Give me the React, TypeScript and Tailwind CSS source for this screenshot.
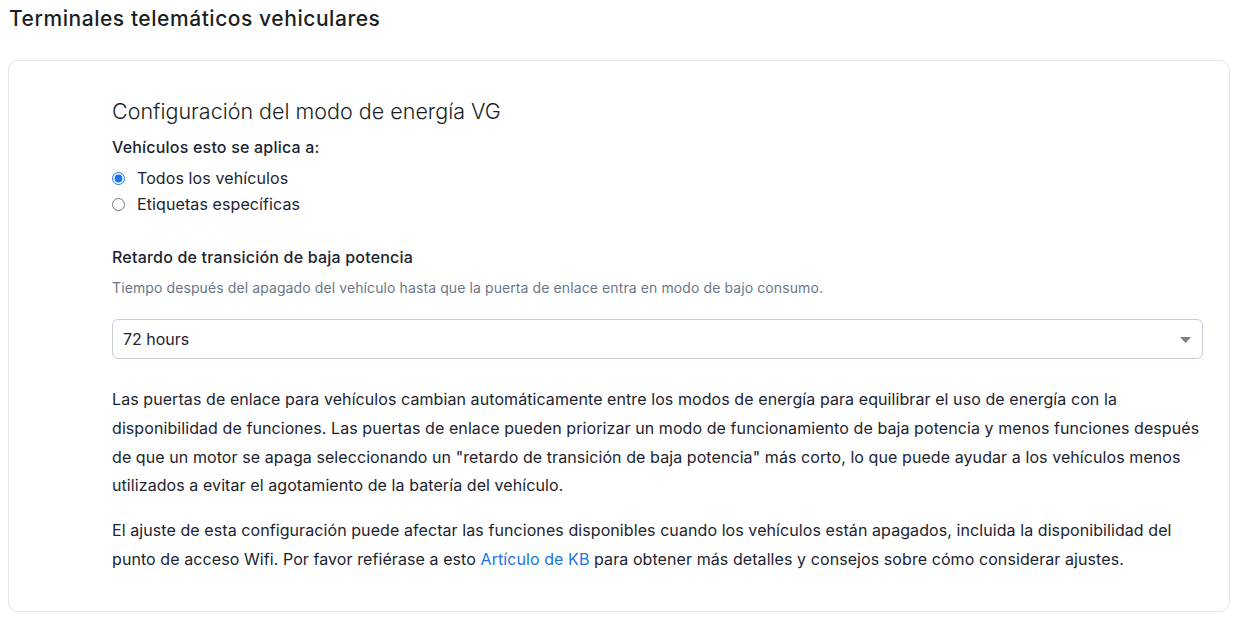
import React, { useState } from 'react'

// Power mode settings card for vehicle gateways
const options = [
  { value: 'all', label: 'Todos los vehículos' },
  { value: 'tags', label: 'Etiquetas específicas' },
]

export default function App() {
  const [applyTo, setApplyTo] = useState('all')
  const [delay, setDelay] = useState('72')

  return (
    <div className="min-h-screen bg-white text-[#1c2430] font-['Inter',sans-serif]">
      <h1 className="pl-[9px] pt-[5px] text-[21px] leading-[28px] font-medium tracking-[0.55px] text-[#1b1f24]">
        Terminales telemáticos vehiculares
      </h1>

      <div className="ml-2 mr-[5px] mt-[27px] rounded-[10px] border border-[#e3e6ea] pl-[103px] pr-[26px] pt-[34px] pb-[37px]">
        <h2 className="text-[21.5px] leading-[32px] font-light text-[#1b1f24]">
          Configuración del modo de energía VG
        </h2>

        <div className="mt-[9px] text-[16px] leading-[22px] font-medium tracking-[0.2px]">Vehículos esto se aplica a:</div>
        <div className="mt-[9px] flex flex-col gap-[4px]">
          {options.map((o) => (
            <label key={o.value} className="flex items-center gap-[12px] text-[16px] leading-[22px] tracking-[0.1px] cursor-pointer">
              <input
                type="radio"
                name="applyTo"
                checked={applyTo === o.value}
                onChange={() => setApplyTo(o.value)}
                className="h-[13px] w-[13px] m-0 accent-[#1a73e8]"
              />
              {o.label}
            </label>
          ))}
        </div>

        <div className="mt-[31px] text-[16px] leading-[22px] font-medium tracking-[0.2px]">Retardo de transición de baja potencia</div>
        <p className="mt-[10px] text-[14px] leading-[20px] tracking-[0.1px] text-[#6b7788]">
          Tiempo después del apagado del vehículo hasta que la puerta de enlace entra en modo de bajo consumo.
        </p>

        <div className="relative mt-[21px]">
          <select
            value={delay}
            onChange={(e) => setDelay(e.target.value)}
            className="h-[40px] w-full appearance-none rounded-[6px] border border-[#c6cdd6] bg-white pl-[10px] pr-8 text-[16px] text-[#1c2430] outline-none"
          >
            <option value="24">24 hours</option>
            <option value="48">48 hours</option>
            <option value="72">72 hours</option>
          </select>
          <svg className="pointer-events-none absolute right-[12px] top-[18px]" width="11" height="6" viewBox="0 0 11 6">
            <path d="M0 0h11L5.5 6z" fill="#7c828a" />
          </svg>
        </div>

        <p className="mt-[26px] text-[16px] leading-[28.8px] tracking-[0.08px]">
          Las puertas de enlace para vehículos cambian automáticamente entre los modos de energía para equilibrar el uso de energía con la disponibilidad de funciones. Las puertas de enlace pueden priorizar un modo de funcionamiento de baja potencia y menos funciones después de que un motor se apaga seleccionando un "retardo de transición de baja potencia" más corto, lo que puede ayudar a los vehículos menos utilizados a evitar el agotamiento de la batería del vehículo.
        </p>
        <p className="mt-[16px] text-[16px] leading-[28.8px] tracking-[0.08px]">
          El ajuste de esta configuración puede afectar las funciones disponibles cuando los vehículos están apagados, incluida la disponibilidad del punto de acceso Wifi. Por favor refiérase a esto{' '}
          <a href="#" className="text-[#1a73e8]">Artículo de KB</a> para obtener más detalles y consejos sobre cómo considerar ajustes.
        </p>
      </div>
    </div>
  )
}
